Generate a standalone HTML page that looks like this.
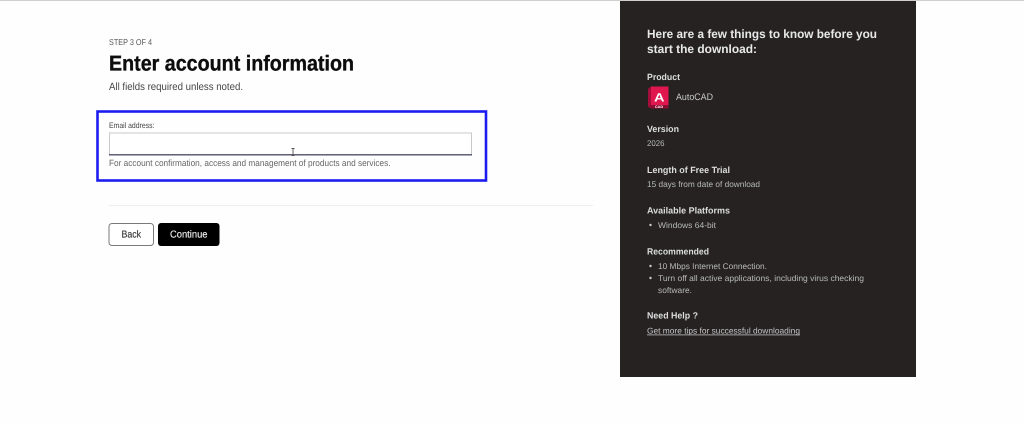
<!DOCTYPE html>
<html lang="en">
<head>
<meta charset="utf-8">
<title>Enter account information</title>
<style>
html,body{margin:0;padding:0;background:#fefefe;width:1024px;height:424px;overflow:hidden}
svg{display:block;position:absolute;left:0;top:0}
text{font-family:"Liberation Sans",sans-serif;text-rendering:geometricPrecision}
.b{font-weight:bold}
</style>
</head>
<body>
<svg width="1024" height="424" viewBox="0 0 1024 424" xmlns="http://www.w3.org/2000/svg">
<defs><filter id="s" x="-5%" y="-5%" width="110%" height="110%"><feGaussianBlur stdDeviation="0.35"/></filter></defs>
<rect x="0" y="0" width="1024" height="1" fill="#cfcfcf"/>
<g filter="url(#s)">
<text x="109" y="45" font-size="8.500" fill="#555" textLength="43" lengthAdjust="spacingAndGlyphs">STEP 3 OF 4</text>
<text class="b" x="109" y="70.500" font-size="21.500" fill="#0a0a0a" stroke="#0a0a0a" stroke-width="0.350" textLength="245" lengthAdjust="spacingAndGlyphs">Enter account information</text>
<text x="109" y="90" font-size="10.500" fill="#444" textLength="134" lengthAdjust="spacingAndGlyphs">All fields required unless noted.</text>
<rect x="97.500" y="111.500" width="388.500" height="69" fill="none" stroke="#1d1df0" stroke-width="2.600"/>
<text x="109" y="128" font-size="8" fill="#444" textLength="45.500" lengthAdjust="spacingAndGlyphs">Email address:</text>
<rect x="109.500" y="133" width="362" height="22" fill="#fff" stroke="#c9c9c9" stroke-width="1"/>
<rect x="109" y="154.200" width="363" height="1.200" fill="#3b3d58"/>
<path d="M291.500 148.500h3M293 148.500v7M291.500 155.500h3" stroke="#555" stroke-width="0.900" fill="none"/>
<text x="109" y="166" font-size="9" fill="#666" textLength="281.500" lengthAdjust="spacingAndGlyphs">For account confirmation, access and management of products and services.</text>
<rect x="109" y="205" width="484" height="1" fill="#eeeeea"/>
<rect x="109" y="223.500" width="44.500" height="22" rx="3" fill="#fff" stroke="#7a7a7a" stroke-width="1"/>
<text x="121.500" y="237.500" font-size="10" fill="#333" stroke="#333" stroke-width="0.150" textLength="19.500" lengthAdjust="spacingAndGlyphs">Back</text>
<rect x="158" y="223" width="61.500" height="23" rx="3" fill="#000"/>
<text x="170" y="237.500" font-size="10" fill="#eee" stroke="#eee" stroke-width="0.150" textLength="37.500" lengthAdjust="spacingAndGlyphs">Continue</text>
<rect x="620" y="1" width="296" height="376" fill="#252424"/>
<text class="b" x="647" y="38" font-size="12" fill="#e8e8e8" textLength="230" lengthAdjust="spacingAndGlyphs">Here are a few things to know before you</text>
<text class="b" x="647" y="53" font-size="12" fill="#e8e8e8" textLength="110" lengthAdjust="spacingAndGlyphs">start the download:</text>
<text class="b" x="647" y="80" font-size="9" fill="#ddd" textLength="33" lengthAdjust="spacingAndGlyphs">Product</text>
<path d="M651 86.500h17.500v18.500H651z" fill="#e0134f"/>
<path d="M648 89l3-2.500v18.500l-3 2z" fill="#a50f3c"/>
<path d="M648 107l3-2h17.500v3.500H651z" fill="#8c0c33"/>
<text class="b" x="654" y="101.500" font-size="12" fill="#fff" textLength="10.500" lengthAdjust="spacingAndGlyphs">A</text>
<text class="b" x="655" y="107.900" font-size="3.500" fill="#fff" textLength="8" lengthAdjust="spacingAndGlyphs">CAD</text>
<text x="676" y="100" font-size="9.500" fill="#c8c8c8" textLength="37" lengthAdjust="spacingAndGlyphs">AutoCAD</text>
<text class="b" x="647" y="132" font-size="9" fill="#ddd" textLength="32" lengthAdjust="spacingAndGlyphs">Version</text>
<text x="647" y="146" font-size="8.300" fill="#b8b8b8" textLength="17.500" lengthAdjust="spacingAndGlyphs">2026</text>
<text class="b" x="647" y="173" font-size="9" fill="#ddd" textLength="83" lengthAdjust="spacingAndGlyphs">Length of Free Trial</text>
<text x="647" y="187" font-size="8.300" fill="#b8b8b8" textLength="113" lengthAdjust="spacingAndGlyphs">15 days from date of download</text>
<text class="b" x="647" y="213.500" font-size="9" fill="#ddd" textLength="83" lengthAdjust="spacingAndGlyphs">Available Platforms</text>
<circle cx="650.500" cy="225" r="1.200" fill="#ccc"/>
<text x="658" y="228" font-size="8.300" fill="#b8b8b8" textLength="58" lengthAdjust="spacingAndGlyphs">Windows 64-bit</text>
<text class="b" x="647" y="254.500" font-size="9" fill="#ddd" textLength="62" lengthAdjust="spacingAndGlyphs">Recommended</text>
<circle cx="650.500" cy="266" r="1.200" fill="#ccc"/>
<text x="658" y="269" font-size="8.300" fill="#b8b8b8" textLength="109" lengthAdjust="spacingAndGlyphs">10 Mbps Internet Connection.</text>
<circle cx="650.500" cy="278" r="1.200" fill="#ccc"/>
<text x="658" y="281" font-size="8.300" fill="#b8b8b8" textLength="206" lengthAdjust="spacingAndGlyphs">Turn off all active applications, including virus checking</text>
<text x="658" y="293" font-size="8.300" fill="#b8b8b8" textLength="34" lengthAdjust="spacingAndGlyphs">software.</text>
<text class="b" x="647" y="318.500" font-size="9" fill="#ddd" textLength="51" lengthAdjust="spacingAndGlyphs">Need Help ?</text>
<text x="647" y="333.500" font-size="8.300" fill="#c4c4c4" textLength="153" lengthAdjust="spacingAndGlyphs">Get more tips for successful downloading</text>
<rect x="647" y="334.500" width="153" height="0.800" fill="#bdbdbd"/>
</g>
</svg>
</body>
</html>
